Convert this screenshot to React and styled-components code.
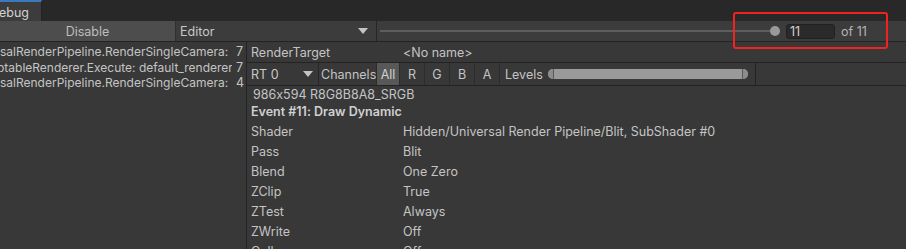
import React from 'react';
import styled, { createGlobalStyle } from 'styled-components';

const GlobalStyle = createGlobalStyle`
  html, body {
    margin: 0;
    padding: 0;
    background: #383838;
  }
  body {
    font-family: Inter, 'Noto Sans', 'Liberation Sans', sans-serif;
    font-size: 12px;
    font-feature-settings: 'calt' 0;
    color: #c4c4c4;
  }
`;

const Window = styled.div`
  position: relative;
  width: 906px;
  height: 249px;
  overflow: hidden;
  background: #383838;
  display: flex;
  flex-direction: column;
`;

const TabBar = styled.div`
  height: 21px;
  background: #282828;
  display: flex;
  flex-shrink: 0;
`;

const Tab = styled.div`
  width: 42px;
  box-sizing: border-box;
  background: #3c3c3c;
  border-top: 2px solid #3a79bb;
  border-right: 1px solid #232323;
  display: flex;
  align-items: center;
  font-size: 12.5px;
  color: #d2d2d2;
  padding-top: 1px;
  text-indent: -1px;
`;

const Toolbar = styled.div`
  height: 20px;
  background: #3c3c3c;
  border-bottom: 1px solid #232323;
  display: flex;
  align-items: stretch;
  flex-shrink: 0;
`;

const ToolButton = styled.div`
  width: 175px;
  background: #4d4d4d;
  border-right: 1px solid #303030;
  display: flex;
  align-items: center;
  justify-content: center;
  font-size: 12.5px;
  color: #bdbdbd;
`;

const Dropdown = styled.div`
  width: ${({ $w }) => $w}px;
  box-sizing: border-box;
  padding: 0 ${({ $pr }) => $pr || 8}px 0 4px;
  display: flex;
  align-items: center;
  justify-content: space-between;
  border-right: 1px solid #262626;
  font-size: 12.5px;
  color: #c8c8c8;
`;

const Arrow = styled.span`
  width: 0;
  height: 0;
  border-left: 5px solid transparent;
  border-right: 5px solid transparent;
  border-top: 6px solid #c4c4c4;
`;

const SliderArea = styled.div`
  flex: 1;
  display: flex;
  align-items: center;
  padding-left: 3px;
`;

const Track = styled.div`
  flex: 1;
  height: 2px;
  background: #5e5e5e;
`;

const Thumb = styled.div`
  width: 10px;
  height: 10px;
  border-radius: 50%;
  background: #999999;
  margin-right: 6px;
`;

const NumberField = styled.div`
  width: 49px;
  height: 15px;
  box-sizing: border-box;
  align-self: center;
  background: #2a2a2a;
  border: 1px solid #212121;
  border-radius: 3px;
  padding-left: 3px;
  font-size: 12.5px;
  line-height: 13px;
  color: #d2d2d2;
`;

const OfLabel = styled.div`
  width: 71px;
  box-sizing: border-box;
  padding-left: 6px;
  display: flex;
  align-items: center;
  font-size: 12.5px;
  color: #b4b4b4;
`;

const Body = styled.div`
  flex: 1;
  display: flex;
  min-height: 0;
`;

const EventList = styled.div`
  width: 246px;
  flex-shrink: 0;
  border-right: 1px solid #232323;
  padding-top: 2px;
  overflow: hidden;
`;

const EventRow = styled.div`
  height: 15.5px;
  display: flex;
  align-items: center;
  font-size: 12px;
  color: #c4c4c4;
`;

const EventName = styled.div`
  width: 232px;
  overflow: hidden;
  white-space: nowrap;
  flex-shrink: 0;
  text-indent: ${({ $shift }) => $shift || 0}px;
`;

const EventCount = styled.div`
  padding-left: 4px;
  font-size: 12.5px;
`;

const Details = styled.div`
  flex: 1;
  display: flex;
  flex-direction: column;
`;

const PropRow = styled.div`
  height: 20px;
  display: flex;
  align-items: center;
  padding-left: 4px;
  font-size: 12.5px;
  color: #c4c4c4;
  border-bottom: ${({ $line }) => ($line ? '1px solid #232323' : 'none')};
  flex-shrink: 0;
`;

const PropLabel = styled.div`
  width: 152px;
  flex-shrink: 0;
`;

const ChannelRow = styled.div`
  height: 22px;
  display: flex;
  align-items: stretch;
  border-bottom: 1px solid #232323;
  flex-shrink: 0;
  font-size: 12.5px;
`;

const ChannelsLabel = styled.div`
  width: 57px;
  display: flex;
  align-items: center;
  padding-left: 2px;
  box-sizing: border-box;
  white-space: nowrap;
`;

const ChannelButton = styled.div`
  width: ${({ $w }) => $w || 24}px;
  display: flex;
  align-items: center;
  justify-content: center;
  border-left: 1px solid #2c2c2c;
  background: ${({ $active }) => ($active ? '#585858' : 'transparent')};
  color: ${({ $active }) => ($active ? '#d0d0d0' : '#c4c4c4')};
`;

const LevelsBox = styled.div`
  width: 257px;
  box-sizing: border-box;
  display: flex;
  align-items: center;
  gap: 5px;
  padding-left: 5px;
  border-left: 1px solid #2c2c2c;
  border-right: 1px solid #232323;
`;

const LevelsBar = styled.div`
  width: 200px;
  height: 10px;
  display: flex;
  border-radius: 5px;
  overflow: hidden;
  background: #9a9a9a;
`;

const LevelsCap = styled.div`
  width: 5px;
  background: #8c8c8c;
  border-${({ $side }) => ($side === 'left' ? 'right' : 'left')}: 1px solid #5a5a5a;
`;

const LevelsFill = styled.div`
  flex: 1;
`;

const InfoLine = styled.div`
  height: ${({ $h }) => $h}px;
  display: flex;
  align-items: center;
  padding-left: ${({ $pl }) => $pl}px;
  font-size: 12.5px;
  font-weight: ${({ $bold }) => ($bold ? 600 : 400)};
  color: ${({ $bold }) => ($bold ? '#d0d0d0' : '#c4c4c4')};
  flex-shrink: 0;
`;

const Highlight = styled.div`
  position: absolute;
  left: 733px;
  top: 12px;
  width: 155px;
  height: 37px;
  box-sizing: border-box;
  border: 2px solid #f2231f;
  border-radius: 3px;
  pointer-events: none;
`;

const events = [
  { name: 'salRenderPipeline.RenderSingleCamera: Main Camera', count: 7, shift: 0 },
  { name: 'ptableRenderer.Execute: default_renderer', count: 7, shift: -3 },
  { name: 'salRenderPipeline.RenderSingleCamera: UI', count: 4, shift: 0 },
];

const props = [
  ['Shader', 'Hidden/Universal Render Pipeline/Blit, SubShader #0'],
  ['Pass', 'Blit'],
  ['Blend', 'One Zero'],
  ['ZClip', 'True'],
  ['ZTest', 'Always'],
  ['ZWrite', 'Off'],
  ['Cull', 'Off'],
];

export default function App() {
  return (
    <Window>
      <GlobalStyle />
      <TabBar>
        <Tab>ebug</Tab>
      </TabBar>
      <Toolbar>
        <ToolButton>Disable</ToolButton>
        <Dropdown $w={201}>
          Editor
          <Arrow />
        </Dropdown>
        <SliderArea>
          <Track />
          <Thumb />
        </SliderArea>
        <NumberField>11</NumberField>
        <OfLabel>of 11</OfLabel>
      </Toolbar>
      <Body>
        <EventList>
          {events.map((e) => (
            <EventRow key={e.name}>
              <EventName $shift={e.shift}>{e.name}</EventName>
              <EventCount>{e.count}</EventCount>
            </EventRow>
          ))}
        </EventList>
        <Details>
          <PropRow $line>
            <PropLabel>RenderTarget</PropLabel>
            &lt;No name&gt;
          </PropRow>
          <ChannelRow>
            <Dropdown $w={72} $pr={5}>
              RT 0
              <Arrow />
            </Dropdown>
            <ChannelsLabel>Channels</ChannelsLabel>
            <ChannelButton $w={22} $active>All</ChannelButton>
            <ChannelButton>R</ChannelButton>
            <ChannelButton>G</ChannelButton>
            <ChannelButton>B</ChannelButton>
            <ChannelButton>A</ChannelButton>
            <LevelsBox>
              Levels
              <LevelsBar>
                <LevelsCap $side="left" />
                <LevelsFill />
                <LevelsCap $side="right" />
              </LevelsBar>
            </LevelsBox>
          </ChannelRow>
          <InfoLine $h={16} $pl={6}>986x594 R8G8B8A8_SRGB</InfoLine>
          <InfoLine $h={19} $pl={4} $bold>Event #11: Draw Dynamic</InfoLine>
          {props.map(([k, v]) => (
            <PropRow key={k}>
              <PropLabel>{k}</PropLabel>
              {v}
            </PropRow>
          ))}
        </Details>
      </Body>
      <Highlight />
    </Window>
  );
}
